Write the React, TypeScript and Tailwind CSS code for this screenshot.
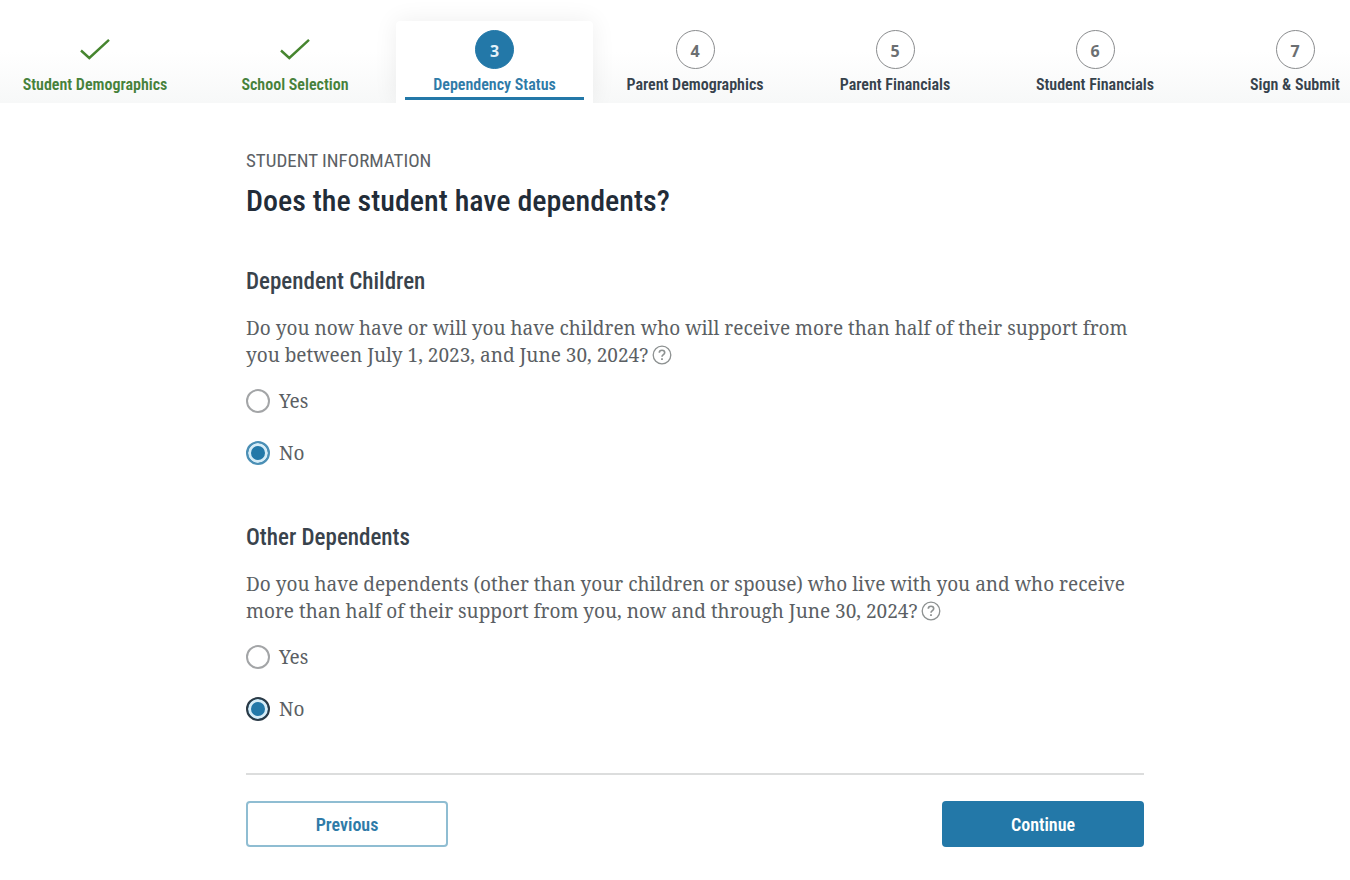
import { useState } from "react";

type StepState = "done" | "current" | "todo";

const steps: { label: string; state: StepState }[] = [
  { label: "Student Demographics", state: "done" },
  { label: "School Selection", state: "done" },
  { label: "Dependency Status", state: "current" },
  { label: "Parent Demographics", state: "todo" },
  { label: "Parent Financials", state: "todo" },
  { label: "Student Financials", state: "todo" },
  { label: "Sign & Submit", state: "todo" },
];

const labelColor: Record<StepState, string> = {
  done: "text-[#46813a]",
  current: "text-[#2f7ba8]",
  todo: "text-[#36424c]",
};

function StepMark({ state, number }: { state: StepState; number: number }) {
  if (state === "done") {
    return (
      <span className="flex size-[39px] items-center justify-center">
        <svg viewBox="0 0 30 24" className="h-6 w-[30px]" fill="none" stroke="#46852f" strokeWidth="2.4" aria-hidden="true">
          <path d="M1 12.5 9.3 20 29 1.8" />
        </svg>
      </span>
    );
  }
  const look =
    state === "current"
      ? "border-[#2378a8] bg-[#2378a8] text-[#e3f1f9]"
      : "border-[#8a8c8e] bg-white text-[#6b6f72]";
  return (
    <span className={`flex size-[39px] items-center justify-center rounded-full border pt-0.5 font-['Open_Sans',sans-serif] text-base font-bold ${look}`}>
      {number}
    </span>
  );
}

function Stepper() {
  return (
    <nav aria-label="Application progress" className="overflow-hidden bg-linear-to-b from-white from-50% to-[#f7f8f8]">
      <ol className="-ml-[5px] grid w-[calc(100%+50px)] grid-cols-7 pt-[21px]">
        {steps.map((step, i) => (
          <li key={step.label} className={step.state === "current" ? "mr-0.5 ml-px rounded-t-sm bg-white shadow-[0_0_24px_rgba(0,0,0,0.07)]" : ""}>
            <a
              href="#"
              aria-current={step.state === "current" ? "step" : undefined}
              className={`flex h-[82px] flex-col items-center pt-[9px] font-['Roboto_Condensed','Roboto',sans-serif] text-base leading-6 font-semibold whitespace-nowrap ${labelColor[step.state]}`}
            >
              <StepMark state={step.state} number={i + 1} />
              <span className="mt-1">{step.label}</span>
              {step.state === "current" && <span className="h-[3px] w-[179px] bg-[#2378a8]" />}
            </a>
          </li>
        ))}
      </ol>
    </nav>
  );
}

function HelpButton({ label }: { label: string }) {
  return (
    <button type="button" aria-label={label} className="ml-1 inline-block align-[-3px]">
      <svg viewBox="0 0 20 20" className="size-5" fill="none" stroke="#8d9191" strokeWidth="1.3" aria-hidden="true">
        <circle cx="10" cy="10" r="8.8" />
        <path d="M7.3 7.7C7.3 6.2 8.5 5.3 10 5.3s2.7 1 2.7 2.4c0 1.9-2.7 2-2.7 4.1" strokeWidth="1.6" />
        <path d="M10 13.2v1.9" strokeWidth="1.8" />
      </svg>
    </button>
  );
}

interface QuestionProps {
  name: string;
  title: string;
  text: string;
  activeRing: string;
}

function Question({ name, title, text, activeRing }: QuestionProps) {
  const [answer, setAnswer] = useState("No");
  return (
    <section>
      <h2 className="font-['Roboto_Condensed','Roboto',sans-serif] text-[23px] leading-8 font-medium text-[#39434c]">{title}</h2>
      <fieldset className="mt-[17px]">
        <legend className="font-['Noto_Serif','DejaVu_Serif',serif] text-[19px] leading-[27px] text-[#5b5f64]">
          {text}
          <HelpButton label={`Help: ${title}`} />
        </legend>
        <div className="mt-[18px] flex flex-col items-start gap-6">
          {["Yes", "No"].map((option) => (
            <label key={option} className="flex h-7 items-center gap-[9px] font-['Noto_Serif','DejaVu_Serif',serif] text-[19px] text-[#5b5f64]">
              <input
                type="radio"
                name={name}
                checked={answer === option}
                onChange={() => setAnswer(option)}
                className={`size-6 appearance-none rounded-full border-2 border-[#a3a5a7] bg-white checked:bg-[#2378a8] checked:shadow-[inset_0_0_0_3px_#d6ecf7] ${activeRing}`}
              />
              {option}
            </label>
          ))}
        </div>
      </fieldset>
    </section>
  );
}

export default function App() {
  return (
    <div className="min-h-screen bg-white">
      <Stepper />
      <main className="flex justify-center pt-[46px] pr-4 pl-14">
        <div className="w-full max-w-[898px]">
          <p className="font-['Roboto_Condensed','Roboto',sans-serif] text-[19px] leading-6 text-[#5c6165]">STUDENT INFORMATION</p>
          <h1 className="mt-2 font-['Roboto_Condensed','Roboto',sans-serif] text-3xl leading-10 font-medium text-[#222c38]">Does the student have dependents?</h1>
          <form onSubmit={(e) => e.preventDefault()}>
            <div className="flex flex-col gap-[55px] pt-[45px]">
              <Question
                name="children"
                title="Dependent Children"
                text="Do you now have or will you have children who will receive more than half of their support from you between July 1, 2023, and June 30, 2024?"
                activeRing="checked:border-[#4b8fb5]"
              />
              <Question
                name="others"
                title="Other Dependents"
                text="Do you have dependents (other than your children or spouse) who live with you and who receive more than half of their support from you, now and through June 30, 2024?"
                activeRing="checked:border-[#2b3a46]"
              />
            </div>
            <div className="mt-[50px] flex justify-between border-t-2 border-[#dcdddd] pt-[26px] font-['Roboto_Condensed','Roboto',sans-serif] text-lg font-semibold">
              <button type="button" className="h-[46px] w-[202px] rounded-sm border-2 border-[#8fbdd2] bg-white pt-0.5 text-[#2f7ba8]">Previous</button>
              <button type="submit" className="h-[46px] w-[202px] rounded-sm bg-[#2378a8] pt-0.5 text-white">Continue</button>
            </div>
          </form>
        </div>
      </main>
    </div>
  );
}
